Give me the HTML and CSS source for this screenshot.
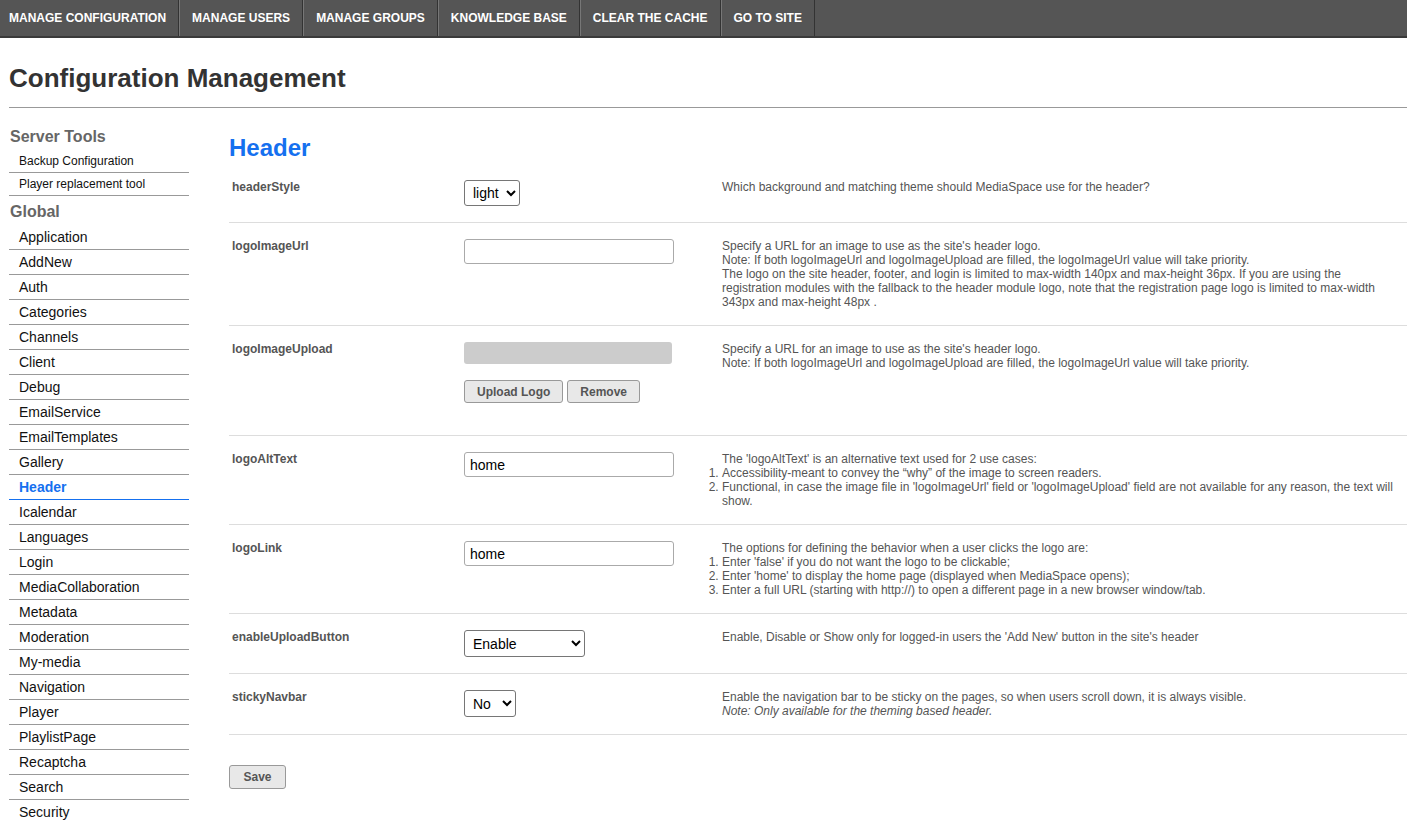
FILE: index.html
```html
<!DOCTYPE html>
<html lang="en">
<head>
    <meta charset="UTF-8">
    <meta name="viewport" content="width=device-width, initial-scale=1.0">
    <title>Configuration Management</title>
    <link rel="stylesheet" href="styles.css">
</head>
<body>

    <ul class="top-nav">
        <li><a href="#">Manage Configuration</a></li>
        <li><a href="#">Manage Users</a></li>
        <li><a href="#">Manage Groups</a></li>
        <li><a href="#">Knowledge Base</a></li>
        <li><a href="#">Clear the Cache</a></li>
        <li><a href="#">Go to Site</a></li>
    </ul>

    <div class="page">
        <h1 class="page-title">Configuration Management</h1>

        <div class="layout">
            <div class="sidebar">
                <h3 class="side-title">Server Tools</h3>
                <ul class="side-list small">
                    <li><a href="#">Backup Configuration</a></li>
                    <li><a href="#">Player replacement tool</a></li>
                </ul>

                <h3 class="side-title">Global</h3>
                <ul class="side-list">
                    <li><a href="#">Application</a></li>
                    <li><a href="#">AddNew</a></li>
                    <li><a href="#">Auth</a></li>
                    <li><a href="#">Categories</a></li>
                    <li><a href="#">Channels</a></li>
                    <li><a href="#">Client</a></li>
                    <li><a href="#">Debug</a></li>
                    <li><a href="#">EmailService</a></li>
                    <li><a href="#">EmailTemplates</a></li>
                    <li><a href="#">Gallery</a></li>
                    <li class="active"><a href="#">Header</a></li>
                    <li><a href="#">Icalendar</a></li>
                    <li><a href="#">Languages</a></li>
                    <li><a href="#">Login</a></li>
                    <li><a href="#">MediaCollaboration</a></li>
                    <li><a href="#">Metadata</a></li>
                    <li><a href="#">Moderation</a></li>
                    <li><a href="#">My-media</a></li>
                    <li><a href="#">Navigation</a></li>
                    <li><a href="#">Player</a></li>
                    <li><a href="#">PlaylistPage</a></li>
                    <li><a href="#">Recaptcha</a></li>
                    <li><a href="#">Search</a></li>
                    <li><a href="#">Security</a></li>
                    <li><a href="#">Widgets</a></li>
                </ul>
            </div>

            <div class="main">
                <h2 class="section-title">Header</h2>

                <form class="config-form">
                    <div class="config-row">
                        <div class="config-label">headerStyle</div>
                        <div class="config-control">
                            <select class="select-light">
                                <option>light</option>
                                <option>dark</option>
                            </select>
                        </div>
                        <div class="config-desc">Which background and matching theme should MediaSpace use for the header?</div>
                    </div>

                    <div class="config-row">
                        <div class="config-label">logoImageUrl</div>
                        <div class="config-control">
                            <input type="text" class="text-input" value="">
                        </div>
                        <div class="config-desc">
                            Specify a URL for an image to use as the site's header logo.<br>
                            Note: If both logoImageUrl and logoImageUpload are filled, the logoImageUrl value will take priority.<br>
                            The logo on the site header, footer, and login is limited to max-width 140px and max-height 36px. If you are using the<br>
                            registration modules with the fallback to the header module logo, note that the registration page logo is limited to max-width 343px and max-height 48px .
                        </div>
                    </div>

                    <div class="config-row">
                        <div class="config-label">logoImageUpload</div>
                        <div class="config-control">
                            <div class="upload-preview"></div>
                            <div class="upload-actions">
                                <button type="button" class="btn">Upload Logo</button>
                                <button type="button" class="btn">Remove</button>
                            </div>
                        </div>
                        <div class="config-desc">
                            Specify a URL for an image to use as the site's header logo.<br>
                            Note: If both logoImageUrl and logoImageUpload are filled, the logoImageUrl value will take priority.
                        </div>
                    </div>

                    <div class="config-row">
                        <div class="config-label">logoAltText</div>
                        <div class="config-control">
                            <input type="text" class="text-input" value="home">
                        </div>
                        <div class="config-desc">
                            The 'logoAltText' is an alternative text used for 2 use cases:
                            <ol>
                                <li>Accessibility-meant to convey the “why” of the image to screen readers.</li>
                                <li>Functional, in case the image file in 'logoImageUrl' field or 'logoImageUpload' field are not available for any reason, the text will show.</li>
                            </ol>
                        </div>
                    </div>

                    <div class="config-row">
                        <div class="config-label">logoLink</div>
                        <div class="config-control">
                            <input type="text" class="text-input" value="home">
                        </div>
                        <div class="config-desc">
                            The options for defining the behavior when a user clicks the logo are:
                            <ol>
                                <li>Enter 'false' if you do not want the logo to be clickable;</li>
                                <li>Enter 'home' to display the home page (displayed when MediaSpace opens);</li>
                                <li>Enter a full URL (starting with http://) to open a different page in a new browser window/tab.</li>
                            </ol>
                        </div>
                    </div>

                    <div class="config-row">
                        <div class="config-label">enableUploadButton</div>
                        <div class="config-control">
                            <select class="select-wide">
                                <option>Enable</option>
                                <option>Disable</option>
                                <option>Show only for logged-in users</option>
                            </select>
                        </div>
                        <div class="config-desc">Enable, Disable or Show only for logged-in users the 'Add New' button in the site's header</div>
                    </div>

                    <div class="config-row">
                        <div class="config-label">stickyNavbar</div>
                        <div class="config-control">
                            <select class="select-small">
                                <option>No</option>
                                <option>Yes</option>
                            </select>
                        </div>
                        <div class="config-desc">
                            Enable the navigation bar to be sticky on the pages, so when users scroll down, it is always visible.<br>
                            <em>Note: Only available for the theming based header.</em>
                        </div>
                    </div>

                    <button type="submit" class="btn save-btn">Save</button>
                </form>
            </div>
        </div>
    </div>

</body>
</html>
```

FILE: styles.css
```css
* {
    box-sizing: border-box;
}

body {
    margin: 0;
    font-family: "Liberation Sans", Arial, sans-serif;
    color: #222;
    background: #fff;
}

/* top navigation */
.top-nav {
    display: flex;
    margin: 0;
    padding: 0;
    list-style: none;
    background: #555;
    border-bottom: 2px solid #3a3a3a;
}

.top-nav li {
    border-left: 1px solid #777;
    border-right: 1px solid #333;
}

.top-nav li:first-child {
    border-left: none;
}

.top-nav a {
    display: block;
    padding: 1px 12px 0;
    line-height: 35px;
    font-size: 12px;
    font-weight: bold;
    color: #fff;
    text-decoration: none;
    text-transform: uppercase;
}

.top-nav li:first-child a {
    padding-left: 9px;
}

/* page */
.page {
    padding-left: 9px;
}

.page-title {
    margin: 25px 0 0;
    padding-bottom: 14px;
    font-size: 26px;
    line-height: 30px;
    color: #333;
    border-bottom: 1px solid #999;
}

.layout {
    display: flex;
    gap: 40px;
    padding-top: 13px;
}

/* sidebar */
.sidebar {
    width: 180px;
    flex-shrink: 0;
}

.side-title {
    margin: 0;
    padding: 7px 0 4px 1px;
    font-size: 16px;
    line-height: 18px;
    color: #666;
}

.side-list {
    margin: 0;
    padding: 0;
    list-style: none;
}

.side-list li {
    border-bottom: 1px solid #999;
}

.side-list a {
    display: block;
    padding-left: 10px;
    font-size: 14px;
    line-height: 24px;
    color: #111;
    text-decoration: none;
}

.side-list.small a {
    font-size: 12px;
    line-height: 22px;
}

.side-list li.active {
    border-bottom-color: #1570ef;
}

.side-list li.active a {
    color: #1570ef;
    font-weight: bold;
}

/* main */
.main {
    flex: 1;
}

.section-title {
    margin: 13px 0 2px;
    font-size: 24px;
    line-height: 28px;
    color: #1570ef;
}

.config-row {
    display: grid;
    grid-template-columns: 235px 258px 1fr;
    padding: 16px 10px 16px 0;
    border-bottom: 1px solid #ddd;
}

.config-label {
    padding-left: 3px;
    font-size: 12px;
    line-height: 14px;
    font-weight: bold;
    color: #555;
}

.config-desc {
    font-size: 12px;
    line-height: 14px;
    color: #555;
}

.config-desc ol {
    margin: 0;
    padding: 0;
}

.config-desc em {
    font-style: italic;
}

select {
    height: 26px;
    padding: 0 2px 0 4px;
    font-family: "Liberation Sans", Arial, sans-serif;
    font-size: 14px;
    color: #000;
    background: #fff;
    border: 1px solid #767676;
    border-radius: 3px;
}

.select-light {
    width: 56px;
}

.select-wide {
    width: 121px;
    height: 27px;
}

.select-small {
    width: 52px;
    height: 27px;
}

.text-input {
    width: 210px;
    height: 25px;
    padding: 0 5px;
    font-family: "Liberation Sans", Arial, sans-serif;
    font-size: 14px;
    color: #000;
    border: 1px solid #aaa;
    border-radius: 3px;
}

.upload-preview {
    width: 208px;
    height: 22px;
    background: #ccc;
    border-radius: 3px;
}

.upload-actions {
    display: flex;
    gap: 4px;
    margin: 16px 0 16px;
}

.btn {
    height: 23px;
    padding: 0 12px;
    font-family: "Liberation Sans", Arial, sans-serif;
    font-size: 12px;
    font-weight: bold;
    color: #555;
    background: #e8e8e8;
    border: 1px solid #999;
    border-radius: 3px;
    cursor: pointer;
}

.save-btn {
    margin-top: 30px;
    width: 57px;
    height: 24px;
}
```
